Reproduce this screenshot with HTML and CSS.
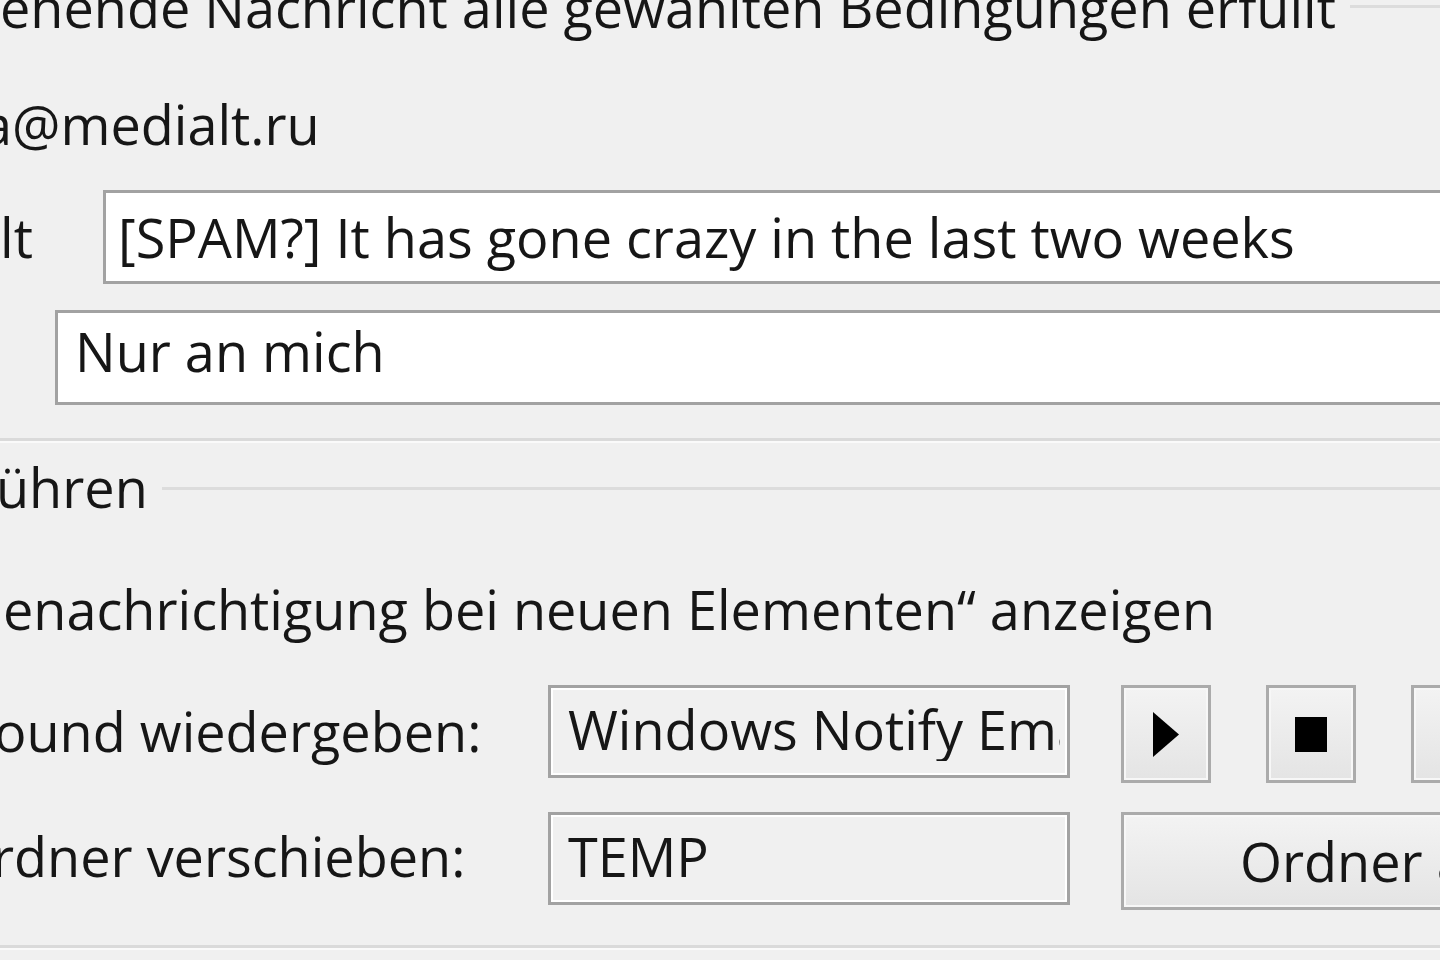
FILE: index.html
```html
<!DOCTYPE html>
<html lang="de">
<head>
    <meta charset="utf-8">
    <title>Regel erstellen</title>
    <link rel="stylesheet" href="styles.css">
</head>
<body>
    <div class="dialog">
        <!-- Bedingungen -->
        <div class="group-head first">
            <span class="group-title">ehende Nachricht alle gewählten Bedingungen erfüllt</span>
            <span class="rule"></span>
        </div>
        <div class="line sender">a@medialt.ru</div>

        <div class="row subject-row">
            <span class="label subject-label">lt</span>
            <div class="field edit">[SPAM?] It has gone crazy in the last two weeks</div>
        </div>
        <div class="row sent-row">
            <div class="field edit combo">Nur an mich</div>
        </div>

        <div class="sep"></div>

        <!-- Aktionen -->
        <div class="group-head second">
            <span class="group-title">ühren</span>
            <span class="rule"></span>
        </div>
        <div class="line notify">enachrichtigung bei neuen Elementen“ anzeigen</div>

        <div class="row sound-row">
            <span class="label wide sound-label">ound wiedergeben:</span>
            <div class="field readonly"><span class="clip">Windows Notify Email</span></div>
            <button class="btn icon-btn" title="Wiedergabe">
                <svg width="26" height="45" viewBox="0 0 26 45"><polygon points="0,0 26,22.5 0,45" fill="#000"/></svg>
            </button>
            <button class="btn icon-btn" title="Stopp">
                <svg width="32" height="35" viewBox="0 0 32 35"><rect width="32" height="35" fill="#000"/></svg>
            </button>
            <button class="btn icon-btn" title="Durchsuchen"></button>
        </div>
        <div class="row move-row">
            <span class="label wide move-label">rdner verschieben:</span>
            <div class="field readonly"><span class="clip">TEMP</span></div>
            <button class="btn folder-btn">Ordner auswählen...</button>
        </div>

        <div class="sep bottom"></div>
    </div>
</body>
</html>
```

FILE: styles.css
```css
/* Fenster */
body {
    margin: 0;
    background: #f0f0f0;
    font-family: "Open Sans", "Noto Sans", sans-serif;
    font-size: 54px;
    line-height: 64px;
    color: #161616;
    overflow: hidden;
}
.dialog {
    width: 1440px;
    height: 960px;
    overflow: hidden;
}

/* Gruppenüberschrift mit Linie */
.group-head {
    display: flex;
    align-items: flex-start;
    white-space: nowrap;
    height: 64px;
}
.group-head .rule {
    flex: 1;
    height: 3px;
    background: #dcdcdc;
    margin-left: 14px;
}
.group-head.first {
    margin-top: -25px;
}
.group-head.first .rule {
    margin-top: 30px;
}
.group-head.second {
    margin-top: 12px;
}
.group-head.second .group-title {
    margin-left: -4px;
}
.group-head.second .rule {
    margin-top: 32px;
}

.line {
    white-space: nowrap;
}
.sender {
    margin-top: 53px;
    text-indent: -18px;
}
.notify {
    margin-top: 58px;
    text-indent: 3px;
}

/* Zeilen mit Eingabefeldern */
.row {
    display: flex;
    align-items: flex-start;
    white-space: nowrap;
}
.label {
    flex: none;
}
.subject-row {
    margin-top: 34px;
}
.subject-label {
    width: 103px;
    padding-top: 15px;
}
.sent-row {
    margin-top: 26px;
    padding-left: 55px;
}
.label.wide {
    width: 548px;
    padding-top: 14px;
}
.sound-label {
    text-indent: -6px;
}
.move-label {
    text-indent: -8px;
}
.sound-row {
    margin-top: 44px;
}
.move-row {
    margin-top: 29px;
}
.move-row .label.wide {
    padding-top: 12px;
}

.field {
    box-sizing: border-box;
    border: 3px solid #a2a2a2;
    overflow: hidden;
    white-space: nowrap;
}
.field.edit {
    flex: 1;
    height: 94px;
    background: #fff;
    padding: 12px 0 0 12px;
    margin-right: -40px;
}
.field.combo {
    height: 95px;
    padding: 6px 0 0 17px;
}
.field.readonly {
    flex: none;
    width: 522px;
    height: 93px;
    background: #f0f0f0;
    box-shadow: inset 0 0 0 2px #fff;
    padding: 9px 7px 0 17px;
    margin-right: 51px;
}
.field .clip {
    display: block;
    overflow: hidden;
}

/* Schaltflächen */
.btn {
    flex: none;
    box-sizing: border-box;
    height: 98px;
    border: 3px solid #ababab;
    background: linear-gradient(#f3f3f3, #e4e4e4);
    box-shadow: inset 0 0 0 2px #f7f7f7;
    font: inherit;
    color: inherit;
    padding: 0;
    margin: 0;
}
.icon-btn {
    width: 90px;
    margin-right: 55px;
    display: flex;
    align-items: center;
    justify-content: center;
}
.icon-btn svg {
    display: block;
}
.folder-btn {
    width: 520px;
    text-align: left;
    padding: 0 0 0 116px;
    line-height: 64px;
}

/* Trennlinien */
.sep {
    height: 0;
    border-top: 3px solid #dadada;
    border-bottom: 2px solid #fafafa;
    margin-top: 33px;
}
.sep.bottom {
    margin-top: 35px;
}
```
